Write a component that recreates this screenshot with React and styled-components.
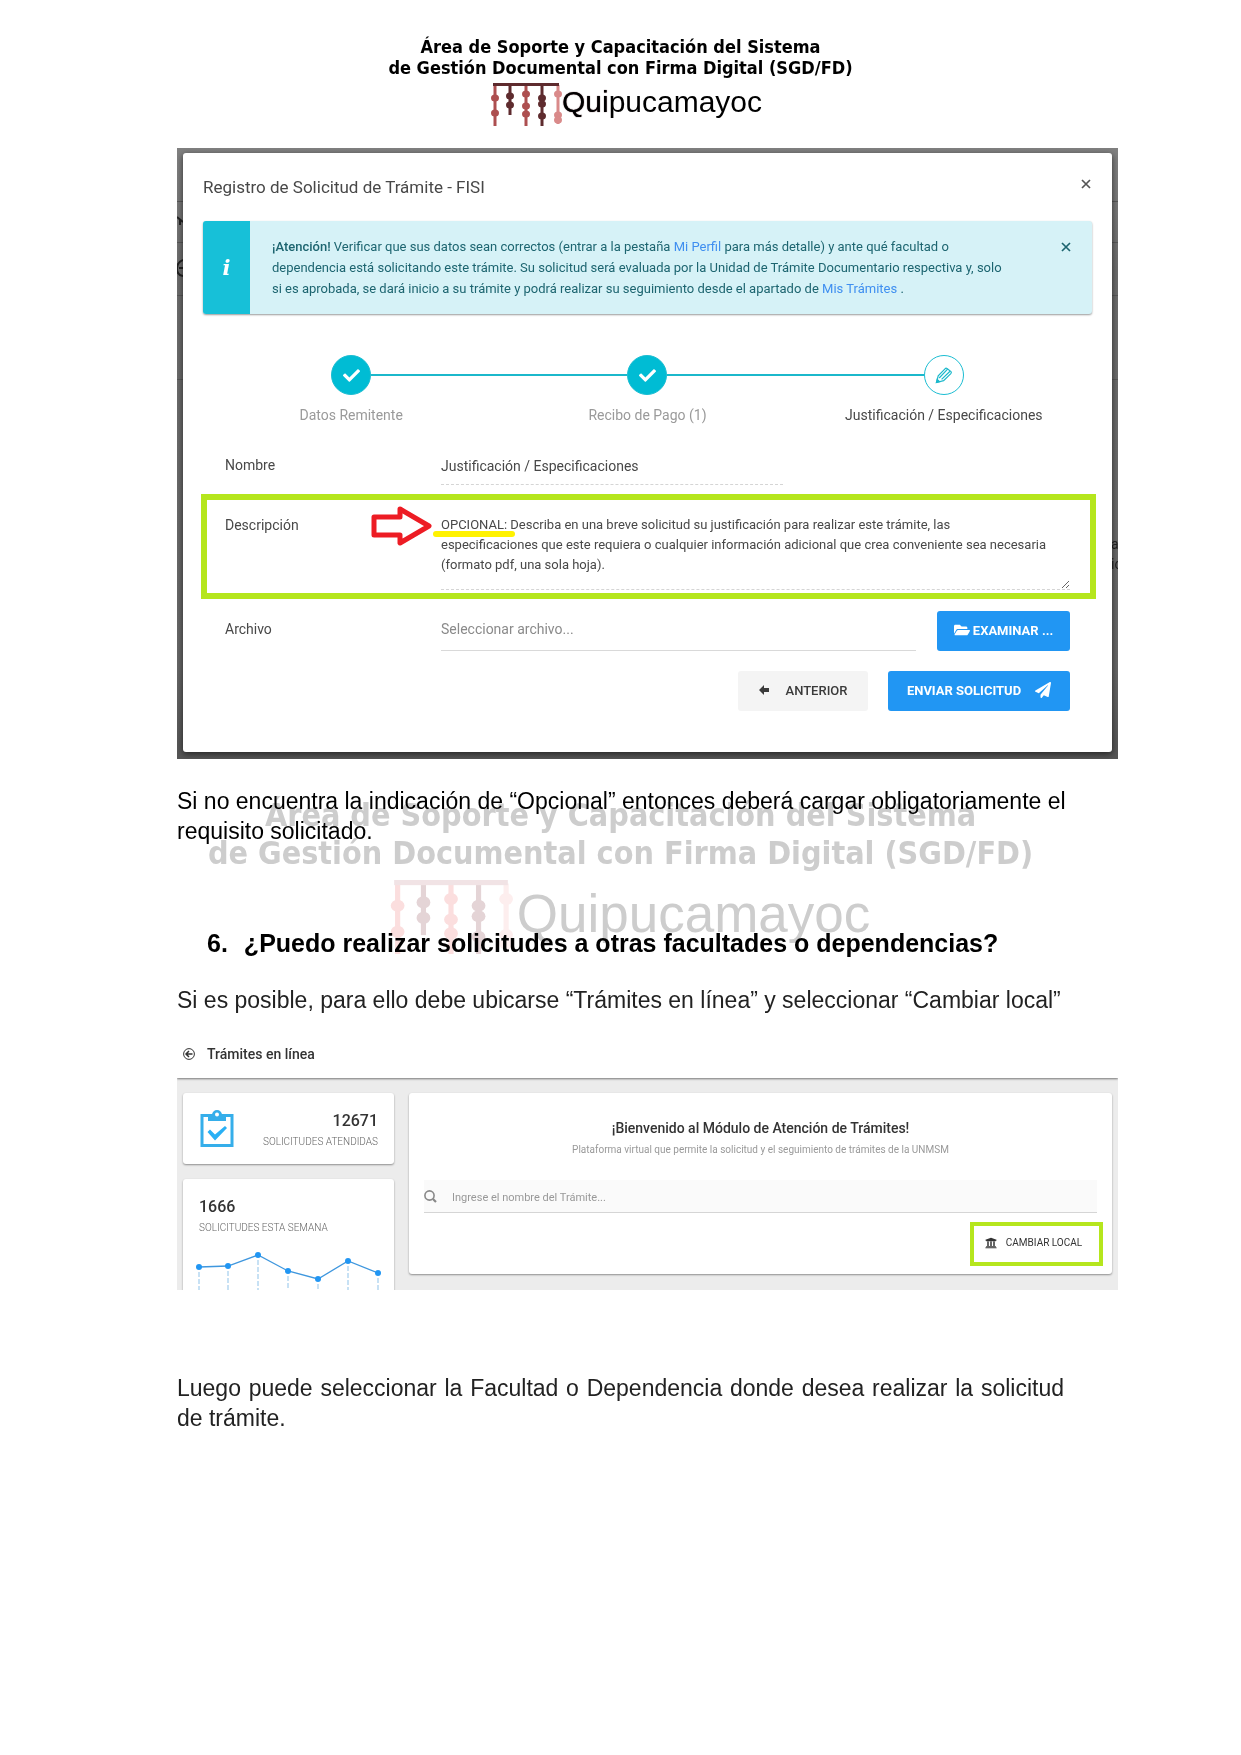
import React from "react";
import styled, { createGlobalStyle } from "styled-components";
import { FaCheck, FaFolderOpen, FaPaperPlane, FaUniversity } from "react-icons/fa";

const GlobalStyle = createGlobalStyle`
  * { box-sizing: border-box; }
  body { margin: 0; background: #fff; }
  button, input, textarea { font-family: inherit; margin: 0; }
  p, h1, h2, h3 { margin: 0; }
`;

const ui = `Roboto, "Liberation Sans", sans-serif`;
const lime = "#b5e61d";

const Page = styled.div`
  padding: 36px 123px 80px 177px;
  font-family: "Liberation Sans", Arial, sans-serif;
  color: #000;
`;

const Column = styled.div`
  margin-right: 54px;
`;

/* ---------- institutional mark ---------- */

const Mark = styled.div`
  display: flex;
  flex-direction: column;
  align-items: center;
  color: ${(p) => (p.$faded ? "#cdcdcd" : "#000")};
  white-space: nowrap;
`;

const MarkTitle = styled.div`
  font-family: "DejaVu Sans Condensed", "Noto Sans", sans-serif;
  font-weight: 700;
  font-size: ${(p) => (p.$faded ? 32 : 18)}px;
  line-height: ${(p) => (p.$faded ? 38 : 21)}px;
  text-align: center;
`;

const MarkLogo = styled.div`
  display: flex;
  align-items: flex-start;
  padding-left: ${(p) => (p.$faded ? 18 : 11)}px;
  margin-top: ${(p) => (p.$faded ? 8 : 5)}px;
  svg { display: block; flex: none; }
`;

const MarkWord = styled.span`
  font-size: ${(p) => (p.$faded ? 53 : 30)}px;
  line-height: ${(p) => (p.$faded ? 68 : 38)}px;
  margin-left: ${(p) => (p.$faded ? 4 : 0)}px;
`;

const Heavy = styled.span`
  text-shadow: 0 0 1px #3a1018;
`;

const strings = [
  { x: 5, end: 43, tone: 0, beads: [15, 30] },
  { x: 20, end: 32, tone: 1, beads: [13, 22] },
  { x: 36, end: 43, tone: 0, beads: [11, 23, 31] },
  { x: 52, end: 43, tone: 1, beads: [15, 21, 33] },
  { x: 68, end: 41, tone: 2, beads: [11, 32, 37] },
];

function QuipuIcon({ width, tones }) {
  return (
    <svg width={width} height={(width * 44) / 72} viewBox="0 0 72 44" aria-hidden="true">
      {strings.map((s) => (
        <g key={s.x} fill={tones[s.tone]}>
          <rect x={s.x - 1.5} y="2" width="3" height={s.end - 2} />
          {s.beads.map((b) => (
            <ellipse key={b} cx={s.x} cy={b} rx="4" ry="3.5" />
          ))}
        </g>
      ))}
      <rect x="3" y="0" width="66" height="3" fill={tones[3]} />
    </svg>
  );
}

function Brand({ faded }) {
  const tones = faded
    ? ["#fbdede", "#e4d4d6", "#fdeeee", "#f1e3e5"]
    : ["#ad4f50", "#5e2b2e", "#d98a8a", "#5e2b2e"];
  return (
    <Mark $faded={faded} aria-hidden={faded ? true : undefined}>
      <MarkTitle $faded={faded}>
        Área de Soporte y Capacitación del Sistema
        <br />
        de Gestión Documental con Firma Digital (SGD/FD)
      </MarkTitle>
      <MarkLogo $faded={faded}>
        <QuipuIcon width={faded ? 124 : 72} tones={tones} />
        <MarkWord $faded={faded}>
          {faded ? "Quipucamayoc" : <><Heavy>Qui</Heavy>pucamayoc</>}
        </MarkWord>
      </MarkLogo>
    </Mark>
  );
}

/* ---------- document text ---------- */

const Prose = styled.section`
  position: relative;
  isolation: isolate;
  padding-top: 27px;
`;

const Watermark = styled.div`
  position: absolute;
  z-index: -1;
  top: 37px;
  left: 0;
  right: 0;
`;

const Paragraph = styled.p`
  font-size: 23px;
  line-height: 30px;
  text-align: ${(p) => (p.$justify ? "justify" : "left")};
  white-space: ${(p) => (p.$keepLines ? "nowrap" : "normal")};
  color: ${(p) => (p.$soft ? "#222" : "#000")};
`;

const Question = styled.h2`
  display: flex;
  gap: 16px;
  margin: 82px 0 27px;
  padding-left: 30px;
  font-size: 25px;
  line-height: 30px;
  white-space: nowrap;
`;

/* ---------- request dialog ---------- */

const Backdrop = styled.div`
  position: relative;
  overflow: hidden;
  margin-top: 21px;
  padding: 5px 6px 7px;
  background: linear-gradient(#808080, #6c6c6c 20%, #666 85%, #555);
  font-family: ${ui};
`;

const BehindLine = styled.i`
  position: absolute;
  left: 0;
  right: 0;
  top: ${(p) => p.$top}px;
  height: 1px;
  background: #585858;
`;

const BehindText = styled.span`
  position: absolute;
  left: calc(100% - 7px);
  top: 386px;
  font-size: 14px;
  line-height: 20px;
  color: #222;
  white-space: nowrap;
`;

const BehindIcon = styled.svg`
  position: absolute;
  left: 0;
  top: 64px;
`;

const Dialog = styled.div`
  position: relative;
  padding: 0 20px 41px;
  border-radius: 3px;
  background: #fff;
  box-shadow: 0 2px 6px rgba(0, 0, 0, 0.6);
  color: #484848;
  font-size: 14px;
`;

const DialogHeader = styled.header`
  display: flex;
  align-items: center;
  justify-content: space-between;
  height: 68px;
`;

const DialogTitle = styled.h3`
  font-size: 17px;
  font-weight: 400;
  color: #484848;
`;

const CloseButton = styled.button`
  display: flex;
  align-items: center;
  justify-content: center;
  flex: none;
  width: 12px;
  height: 20px;
  padding: 0;
  border: 0;
  background: none;
  color: ${(p) => p.$color};
  align-self: flex-start;
  margin-top: ${(p) => p.$drop || 0}px;
`;

const Alert = styled.div`
  display: flex;
  border-radius: 3px;
  overflow: hidden;
  background: #d6f2f7;
  box-shadow: 0 1px 2px rgba(0, 0, 0, 0.4);
  color: #1d6570;
`;

const AlertIcon = styled.div`
  display: flex;
  align-items: center;
  justify-content: center;
  width: 47px;
  flex: none;
  background: #17c0d8;
  color: #fff;
  font: italic 700 21px "DejaVu Serif", serif;
`;

const AlertText = styled.p`
  flex: 1;
  padding: 15px 32px 15px 22px;
  font-size: 13px;
  line-height: 21px;
  b { font-weight: 500; }
`;

const AlertLink = styled.a`
  color: #3f8ff0;
  text-decoration: none;
`;

const AlertClose = styled.div`
  display: flex;
  padding: 16px 20px 0 0;
`;

const Steps = styled.ol`
  display: grid;
  grid-template-columns: repeat(3, 1fr);
  margin: 41px 0 0;
  padding: 0;
  list-style: none;
`;

const Step = styled.li`
  display: flex;
  flex-direction: column;
  align-items: center;
  gap: 10px;
  line-height: 20px;
  color: ${(p) => (p.$current ? "#484848" : "#9a9a9a")};
`;

const StepTrack = styled.div`
  display: grid;
  grid-template-columns: 1fr 40px 1fr;
  align-items: center;
  width: 100%;
`;

const StepLine = styled.span`
  height: 2px;
  background: ${(p) => (p.$on ? "#1bb8cb" : "transparent")};
`;

const StepDot = styled.span`
  display: flex;
  align-items: center;
  justify-content: center;
  height: 40px;
  border-radius: 50%;
  border: 1px solid #1bbdd2;
  background: ${(p) => (p.$current ? "#fff" : "#00bcd4")};
  color: ${(p) => (p.$current ? "#1bb8cb" : "#fff")};
`;

const FormRow = styled.div`
  display: grid;
  grid-template-columns: 216px minmax(0, 1fr);
  margin-top: ${(p) => p.$gap}px;
  padding: 0 22px;
`;

const MarkedRow = styled(FormRow)`
  position: relative;
  margin-left: -2px;
  margin-right: -4px;
  padding: 15px 20px 3px 18px;
  border: 6px solid ${lime};
`;

const FieldLabel = styled.label`
  line-height: 20px;
  padding-top: ${(p) => p.$drop || 0}px;
`;

const TextField = styled.input`
  width: ${(p) => p.$width || "100%"};
  height: 35px;
  padding: 0 0 3px;
  border: 0;
  border-bottom: 1px dashed #d5d5d5;
  background: none;
  font-size: 14px;
  color: #484848;
`;

const TextBox = styled.textarea`
  display: block;
  width: 100%;
  height: 75px;
  padding: 0;
  overflow: hidden;
  border: 0;
  border-bottom: 1px dashed #d5d5d5;
  background: none;
  resize: vertical;
  font-size: 13px;
  line-height: 20px;
  color: #484848;
`;

const FileRow = styled.div`
  display: flex;
  align-items: stretch;
  gap: 21px;
`;

const FileField = styled.input`
  flex: 1;
  min-width: 0;
  padding: 0 0 3px;
  border: 0;
  border-bottom: 1px solid #d9d9d9;
  background: none;
  font-size: 14px;
  &::placeholder { color: #8a8a8a; opacity: 1; }
`;

const Button = styled.button`
  display: flex;
  align-items: center;
  justify-content: center;
  gap: ${(p) => p.$gap}px;
  height: 40px;
  width: ${(p) => p.$width}px;
  padding: 0 0 2px;
  border: 0;
  border-radius: 3px;
  background: ${(p) => (p.$plain ? "#f4f4f4" : "#2196f3")};
  color: ${(p) => (p.$plain ? "#3a3a3a" : "#fff")};
  font-size: 13px;
  font-weight: ${(p) => (p.$plain ? 500 : 700)};
  white-space: nowrap;
`;

const Actions = styled.div`
  display: flex;
  justify-content: flex-end;
  gap: 20px;
  margin-top: 20px;
  padding: 0 22px;
`;

const Arrow = styled.svg`
  position: absolute;
  left: 164px;
  top: 5px;
`;

const Underline = styled.span`
  position: absolute;
  left: 226px;
  top: 31px;
  width: 82px;
  height: 6px;
  border-radius: 3px;
  background: #fff200;
  mix-blend-mode: multiply;
`;

const Cross = () => (
  <svg width="10" height="10" viewBox="0 0 10 10" aria-hidden="true">
    <path d="M1 1 9 9M9 1 1 9" stroke="currentColor" strokeWidth="1.7" fill="none" />
  </svg>
);

const PencilIcon = () => (
  <svg width="18" height="18" viewBox="0 0 18 18" fill="none" stroke="currentColor" strokeWidth="1.2" aria-hidden="true">
    <path d="M1.5 16.5 3.2 9.8 10 2.8Q11 1.8 12 2.6L16 5.6Q16.8 6.5 15.8 7.6L8.6 14.6Z" />
    <path d="M4.2 12 12.6 3.2M6.6 13.4 15 5.2" />
    <path d="M1.5 16.5 2.2 13.4 4.6 15.6Z" fill="currentColor" />
  </svg>
);

const requestHint = `OPCIONAL: Describa en una breve solicitud su justificación para realizar este trámite, las
especificaciones que este requiera o cualquier información adicional que crea conveniente sea necesaria
(formato pdf, una sola hoja).`;

function RequestDialog() {
  return (
    <Backdrop>
      <BehindLine $top={53} />
      <BehindLine $top={94} />
      <BehindLine $top={147} />
      <BehindLine $top={231} />
      <BehindIcon width="6" height="66" viewBox="0 0 6 66" fill="none" stroke="#222" strokeWidth="2" aria-hidden="true">
        <path d="M0 5 6 10M3 8V13M6 48Q0 50 0 57 0 63 6 64M6 56H2" />
      </BehindIcon>
      <BehindText>
        a<br />ic
      </BehindText>
      <Dialog>
        <DialogHeader>
          <DialogTitle>Registro de Solicitud de Trámite - FISI</DialogTitle>
          <CloseButton $color="#555" $drop={21} aria-label="Cerrar"><Cross /></CloseButton>
        </DialogHeader>
        <Alert>
          <AlertIcon aria-hidden="true">i</AlertIcon>
          <AlertText>
            <b>¡Atención!</b> Verificar que sus datos sean correctos (entrar a la pestaña{" "}
            <AlertLink href="#perfil">Mi Perfil</AlertLink> para más detalle) y ante qué facultad o
            <br />
            dependencia está solicitando este trámite. Su solicitud será evaluada por la Unidad de
            Trámite Documentario respectiva y, solo
            <br />
            si es aprobada, se dará inicio a su trámite y podrá realizar su seguimiento desde el
            apartado de <AlertLink href="#tramites">Mis Trámites</AlertLink> .
          </AlertText>
          <AlertClose>
            <CloseButton $color="#1d6570" aria-label="Cerrar aviso"><Cross /></CloseButton>
          </AlertClose>
        </Alert>

        <Steps>
          <Step>
            <StepTrack><StepLine /><StepDot><FaCheck size={17} /></StepDot><StepLine $on /></StepTrack>
            Datos Remitente
          </Step>
          <Step>
            <StepTrack><StepLine $on /><StepDot><FaCheck size={17} /></StepDot><StepLine $on /></StepTrack>
            Recibo de Pago (1)
          </Step>
          <Step $current>
            <StepTrack><StepLine $on /><StepDot $current><PencilIcon /></StepDot><StepLine /></StepTrack>
            Justificación / Especificaciones
          </Step>
        </Steps>

        <FormRow $gap={25}>
          <FieldLabel htmlFor="nombre" $drop={5}>Nombre</FieldLabel>
          <TextField id="nombre" $width="342px" defaultValue="Justificación / Especificaciones" />
        </FormRow>

        <MarkedRow $gap={9}>
          <FieldLabel htmlFor="descripcion">Descripción</FieldLabel>
          <TextBox id="descripcion" defaultValue={requestHint} />
          <Arrow width="62" height="42" viewBox="0 0 62 42" aria-hidden="true">
            <path d="M3 12H29V4L58 21 29 38V30H3Z" fill="#fff" stroke="#ed1c24" strokeWidth="5" strokeLinejoin="round" />
          </Arrow>
          <Underline />
        </MarkedRow>

        <FormRow $gap={12}>
          <FieldLabel htmlFor="archivo" $drop={8}>Archivo</FieldLabel>
          <FileRow>
            <FileField id="archivo" readOnly placeholder="Seleccionar archivo..." />
            <Button $gap={3} $width={133}><FaFolderOpen size={16} />EXAMINAR ...</Button>
          </FileRow>
        </FormRow>

        <Actions>
          <Button $plain $gap={17} $width={130}>
            <svg width="10" height="10" viewBox="0 0 10 10" aria-hidden="true">
              <path d="M0 5 5 0V3H10V7H5V10Z" fill="currentColor" />
            </svg>
            ANTERIOR
          </Button>
          <Button $gap={14} $width={182}>ENVIAR SOLICITUD<FaPaperPlane size={16} /></Button>
        </Actions>
      </Dialog>
    </Backdrop>
  );
}

/* ---------- online procedures dashboard ---------- */

const Dashboard = styled.div`
  margin-top: 15px;
  font-family: ${ui};
  color: #333;
`;

const DashboardHeader = styled.header`
  display: flex;
  align-items: center;
  gap: 12px;
  height: 48px;
  padding-left: 6px;
  position: relative;
  background: #fff;
  box-shadow: 0 1px 2px rgba(0, 0, 0, 0.5);
  clip-path: inset(0 0 -4px 0);
  font-size: 14px;
  font-weight: 500;
`;

const DashboardBody = styled.div`
  display: grid;
  grid-template-columns: 211px minmax(0, 1fr);
  gap: 15px;
  height: 212px;
  overflow: hidden;
  padding: 15px 6px 0;
  background: #ececec;
`;

const Stack = styled.div`
  display: flex;
  flex-direction: column;
  gap: 15px;
`;

const Card = styled.div`
  border-radius: 3px;
  background: #fff;
  box-shadow: 0 1px 2px rgba(0, 0, 0, 0.4);
`;

const CountCard = styled(Card)`
  display: flex;
  justify-content: space-between;
  align-items: center;
  height: 71px;
  padding: 0 16px;
`;

const Count = styled.div`
  padding-top: 5px;
`;

const WeekCard = styled(Card)`
  padding: 18px 16px 0;
  height: 140px;
  svg { display: block; margin: 12px -4px 0; width: calc(100% + 8px); height: auto; }
`;

const Figure = styled.div`
  font-size: 16px;
  font-weight: 500;
  line-height: 20px;
  text-align: ${(p) => p.$align || "left"};
`;

const Caption = styled.div`
  margin-top: 1px;
  font-size: 10px;
  font-weight: 300;
  line-height: 20px;
  color: #666;
  white-space: nowrap;
`;

const WelcomeCard = styled(Card)`
  height: 181px;
  padding: 25px 15px 0;
`;

const WelcomeTitle = styled.h3`
  font-size: 14px;
  font-weight: 500;
  line-height: 20px;
  text-align: center;
`;

const WelcomeText = styled.p`
  margin-top: 2px;
  font-size: 10px;
  line-height: 20px;
  text-align: center;
  color: #999;
`;

const Search = styled.label`
  display: flex;
  align-items: center;
  gap: 15px;
  height: 33px;
  margin-top: 20px;
  border-bottom: 1px solid #d5d5d5;
  background: #fafafa;
  color: #888;
`;

const SearchField = styled.input`
  flex: 1;
  padding: 2px 0 0;
  border: 0;
  background: none;
  font-size: 11px;
  &::placeholder { color: #999; opacity: 1; }
`;

const SwitchPlace = styled.button`
  display: flex;
  align-items: center;
  justify-content: center;
  gap: 9px;
  width: 133px;
  height: 44px;
  margin: 9px -6px 0 auto;
  padding: 0 6px 3px 0;
  border: 4px solid ${lime};
  background: #fff;
  color: #333;
  font-size: 10px;
  white-space: nowrap;
`;

const week = [
  [4, 17], [33, 16], [63, 5], [93, 21], [123, 29], [153, 11], [183, 23],
];

function WeekChart() {
  return (
    <svg viewBox="0 0 187 60" aria-hidden="true">
      {week.map(([x, y]) => (
        <path key={x} d={`M${x} ${y + 5}V60`} stroke="#8fc3ea" strokeDasharray="5 2" />
      ))}
      <polyline points={week.map((p) => p.join(",")).join(" ")} fill="none" stroke="#3f97de" strokeWidth="1.3" />
      {week.map(([x, y]) => (
        <circle key={x} cx={x} cy={y} r="3" fill="#2196f3" />
      ))}
    </svg>
  );
}

function ProceduresDashboard() {
  return (
    <Dashboard>
      <DashboardHeader>
        <svg width="12" height="12" viewBox="0 0 12 12" fill="none" stroke="#333" aria-hidden="true">
          <circle cx="6" cy="6" r="5.4" />
          <path d="M9.5 6H3M6 3 3 6 6 9" strokeWidth="1.5" />
        </svg>
        Trámites en línea
      </DashboardHeader>
      <DashboardBody>
        <Stack>
          <CountCard>
            <svg width="36" height="40" viewBox="0 0 36 40" aria-hidden="true">
              <rect x="3" y="6.5" width="30" height="30" fill="none" stroke="#35aeea" strokeWidth="3" />
              <path d="M9 6H13A5 5 0 0 1 23 6H27V12H9Z" fill="#35aeea" />
              <circle cx="18" cy="5.5" r="2" fill="#fff" />
              <path d="M8.5 23 11 20.5 16 25.5 26 17 28 19 16 31.5Z" fill="#29b0f5" />
            </svg>
            <Count>
              <Figure $align="right">12671</Figure>
              <Caption>SOLICITUDES ATENDIDAS</Caption>
            </Count>
          </CountCard>
          <WeekCard>
            <Figure>1666</Figure>
            <Caption>SOLICITUDES ESTA SEMANA</Caption>
            <WeekChart />
          </WeekCard>
        </Stack>
        <WelcomeCard>
          <WelcomeTitle>¡Bienvenido al Módulo de Atención de Trámites!</WelcomeTitle>
          <WelcomeText>
            Plataforma virtual que permite la solicitud y el seguimiento de trámites de la UNMSM
          </WelcomeText>
          <Search>
            <svg width="13" height="13" viewBox="0 0 13 13" fill="none" stroke="currentColor" aria-hidden="true">
              <circle cx="5.5" cy="5.5" r="4.6" strokeWidth="1.6" />
              <path d="M9 9 12 12" strokeWidth="2.2" />
            </svg>
            <SearchField aria-label="Nombre del trámite" placeholder="Ingrese el nombre del Trámite..." />
          </Search>
          <SwitchPlace><FaUniversity size={12} />CAMBIAR LOCAL</SwitchPlace>
        </WelcomeCard>
      </DashboardBody>
    </Dashboard>
  );
}

const Closing = styled.div`
  margin-top: 83px;
`;

export default function App() {
  return (
    <>
      <GlobalStyle />
      <Page>
        <Column as="header"><Brand /></Column>
        <main>
          <RequestDialog />
          <Column>
            <Prose>
              <Watermark><Brand faded /></Watermark>
              <Paragraph $keepLines>
                Si no encuentra la indicación de “Opcional” entonces deberá cargar obligatoriamente el
                <br />
                requisito solicitado.
              </Paragraph>
              <Question><span>6.</span><span>¿Puedo realizar solicitudes a otras facultades o dependencias?</span></Question>
              <Paragraph $soft>
                Si es posible, para ello debe ubicarse “Trámites en línea” y seleccionar “Cambiar local”
              </Paragraph>
            </Prose>
          </Column>
          <ProceduresDashboard />
          <Column>
            <Closing>
              <Paragraph $justify $soft>
                Luego puede seleccionar la Facultad o Dependencia donde desea realizar la solicitud
                de trámite.
              </Paragraph>
            </Closing>
          </Column>
        </main>
      </Page>
    </>
  );
}
